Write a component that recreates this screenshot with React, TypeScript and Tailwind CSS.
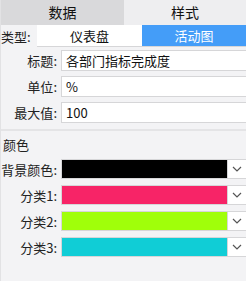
import React from "react";

const font = { fontFamily: '"Noto Sans CJK SC", "Liberation Sans", sans-serif' };

function Chevron() {
  return (
    <svg width="10" height="6" viewBox="0 0 10 6" className="text-[#555]">
      <path d="M1 1 L5 5 L9 1" fill="none" stroke="currentColor" strokeWidth="1.2" />
    </svg>
  );
}

function TextRow({ label, value }: { label: string; value: string }) {
  return (
    <div className="flex items-center h-[21px]">
      <div className="w-[60px] pr-[4px] text-right text-[13px] text-[#222] leading-none">{label}:</div>
      <div className="flex-1 h-full bg-white border border-r-0 border-[#d6d6d8] flex items-center pl-[4px] text-[13px] text-[#111] font-['Liberation_Sans']">
        <span className="font-['Noto_Sans_CJK_SC','Liberation_Sans',sans-serif]">{value}</span>
      </div>
    </div>
  );
}

function ColorRow({ label, color }: { label: string; color: string }) {
  return (
    <div className="flex items-center h-[20px]">
      <div className="w-[60px] pr-[4px] text-right text-[13px] text-[#222] leading-none whitespace-nowrap">{label}:</div>
      <div className="flex-1 h-full flex border border-r-0 border-[#d6d6d8] bg-white">
        <div className="w-[165px] h-full" style={{ backgroundColor: color }} />
        <div className="flex-1 border-l border-[#d6d6d8] flex items-center justify-center">
          <Chevron />
        </div>
      </div>
    </div>
  );
}

export default function App() {
  return (
    <div className="w-[246px] h-[281px] bg-[#f3f3f5] border-l border-[#e2e2e4] overflow-hidden" style={font}>
      {/* Tabs */}
      <div className="flex h-[25px] text-[14px] text-[#111]">
        <div className="w-[123px] bg-[#d9d9db] flex items-center justify-center">数据</div>
        <div className="flex-1 bg-[#eeeef0] flex items-center justify-center">样式</div>
      </div>

      {/* Type segmented */}
      <div className="flex h-[22px] items-center">
        <div className="w-[36px] text-[13px] text-[#222] leading-none">类型:</div>
        <div className="flex-1 h-full flex border-b border-[#d6d6d8] text-[13px]">
          <div className="w-[105px] bg-white flex items-center justify-center text-[#111]">仪表盘</div>
          <div className="flex-1 bg-[#449df8] flex items-center justify-center text-white">活动图</div>
        </div>
      </div>

      {/* Inputs */}
      <div className="flex flex-col gap-[5px] pt-[3px]">
        <TextRow label="标题" value="各部门指标完成度" />
        <TextRow label="单位" value="%" />
        <TextRow label="最大值" value="100" />
      </div>

      <div className="mt-[6px] h-[2px] bg-[#e4e4e6]" />

      <div className="mt-[6px] pl-[2px] text-[13px] text-[#222] leading-[16px]">颜色</div>

      <div className="flex flex-col gap-[6px] mt-[6px]">
        <ColorRow label="背景颜色" color="#000000" />
        <ColorRow label="分类1" color="#f72467" />
        <ColorRow label="分类2" color="#a0ff0a" />
        <ColorRow label="分类3" color="#10cdd6" />
      </div>
    </div>
  );
}
